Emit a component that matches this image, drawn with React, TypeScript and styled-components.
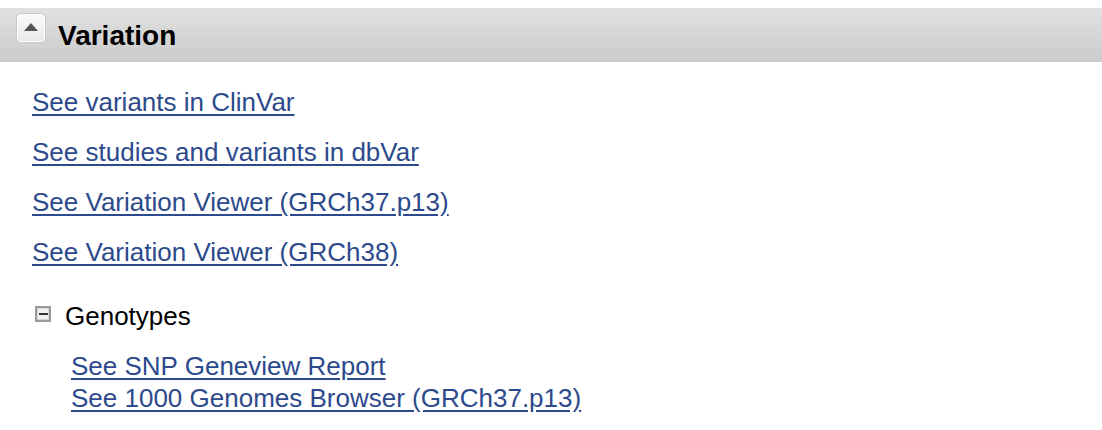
import styled, { createGlobalStyle } from "styled-components";

const GlobalStyle = createGlobalStyle`
  body {
    margin: 0;
    padding-top: 8px;
    background: #ffffff;
    font-family: "Liberation Sans", Arial, sans-serif;
  }
`;

const Secao = styled.section`
  width: 100%;
`;

const Cabecalho = styled.div`
  display: flex;
  align-items: flex-start;
  height: 54px;
  padding: 5px 0 0 16px;
  box-sizing: border-box;
  background: linear-gradient(to bottom, #e1e1e1, #cbcbcb);
`;

const BotaoToggle = styled.button`
  display: flex;
  align-items: center;
  justify-content: center;
  box-sizing: border-box;
  width: 30px;
  height: 30px;
  padding: 0 0 3px 0;
  border: 1px solid #c8c8c8;
  border-radius: 5px;
  background: linear-gradient(to bottom, #fafafa, #e8e8e8);
  box-shadow: inset 0 0 0 1px #ffffff;
`;

const Triangulo = styled.span`
  width: 0;
  height: 0;
  border-left: 7px solid transparent;
  border-right: 7px solid transparent;
  border-bottom: 8px solid #555555;
`;

const Titulo = styled.h2`
  margin: 8px 0 0 12px;
  font-size: 28px;
  font-weight: bold;
  line-height: 30px;
  color: #000000;
`;

const ListaLinks = styled.div`
  display: flex;
  flex-direction: column;
  padding: 15px 0 0 32px;
`;

const Link = styled.a`
  display: block;
  width: fit-content;
  font-size: 26px;
  line-height: 50px;
  color: #2c4a8c;
  text-decoration: underline;
  text-underline-offset: 3px;
`;

const Grupo = styled.div`
  margin: 23px 0 0 35px;
`;

const LinhaGrupo = styled.div`
  display: flex;
  align-items: center;
  height: 32px;
`;

const CaixaMenos = styled.span`
  display: flex;
  align-items: center;
  justify-content: center;
  width: 16px;
  height: 16px;
  box-sizing: border-box;
  border: 2px solid #9a9a9a;
  box-shadow: inset 0 0 0 1px #d6d6d6;
  background: #f2f2f2;
  margin-top: -4px;

  &::after {
    content: "";
    width: 9px;
    height: 2px;
    background: #333333;
  }
`;

const RotuloGrupo = styled.span`
  margin-left: 14px;
  font-size: 26px;
  line-height: 32px;
  color: #000000;
`;

const SubLinks = styled.div`
  display: flex;
  flex-direction: column;
  padding: 18px 0 0 36px;
`;

const SubLink = styled(Link)`
  line-height: 32px;
`;

const links = [
  "See variants in ClinVar",
  "See studies and variants in dbVar",
  "See Variation Viewer (GRCh37.p13)",
  "See Variation Viewer (GRCh38)",
];

const subLinks = [
  "See SNP Geneview Report",
  "See 1000 Genomes Browser (GRCh37.p13)",
];

export default function App() {
  return (
    <>
      <GlobalStyle />
      <Secao>
        <Cabecalho>
          <BotaoToggle type="button" aria-label="Recolher">
            <Triangulo />
          </BotaoToggle>
          <Titulo>Variation</Titulo>
        </Cabecalho>
        <ListaLinks>
          {links.map((texto) => (
            <Link key={texto} href="#">
              {texto}
            </Link>
          ))}
        </ListaLinks>
        <Grupo>
          <LinhaGrupo>
            <CaixaMenos />
            <RotuloGrupo>Genotypes</RotuloGrupo>
          </LinhaGrupo>
          <SubLinks>
            {subLinks.map((texto) => (
              <SubLink key={texto} href="#">
                {texto}
              </SubLink>
            ))}
          </SubLinks>
        </Grupo>
      </Secao>
    </>
  );
}
